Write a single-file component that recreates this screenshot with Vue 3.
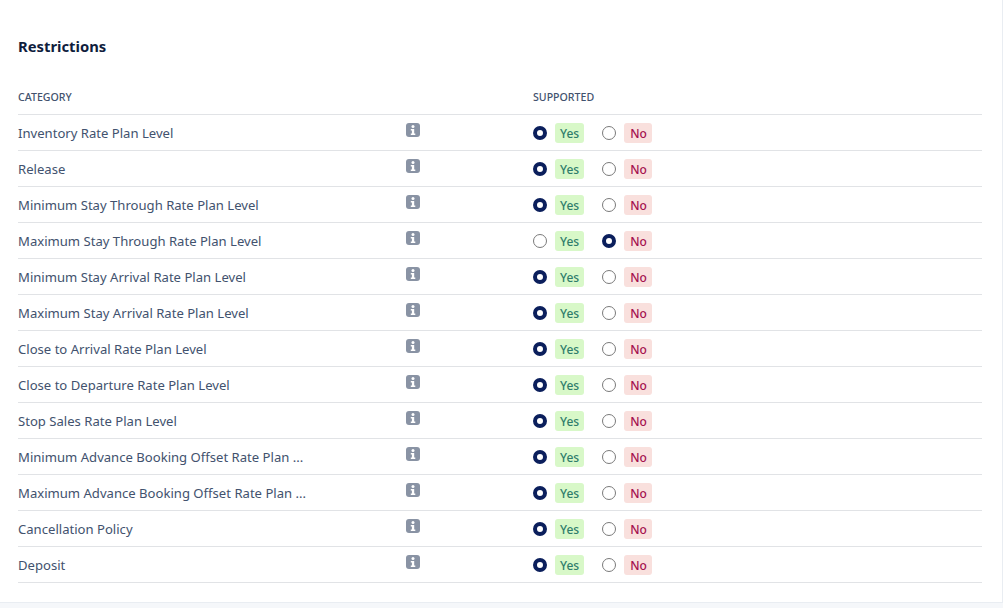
<script setup>
const rows = [
  ['Inventory Rate Plan Level', true],
  ['Release', true],
  ['Minimum Stay Through Rate Plan Level', true],
  ['Maximum Stay Through Rate Plan Level', false],
  ['Minimum Stay Arrival Rate Plan Level', true],
  ['Maximum Stay Arrival Rate Plan Level', true],
  ['Close to Arrival Rate Plan Level', true],
  ['Close to Departure Rate Plan Level', true],
  ['Stop Sales Rate Plan Level', true],
  ['Minimum Advance Booking Offset Rate Plan ...', true],
  ['Maximum Advance Booking Offset Rate Plan ...', true],
  ['Cancellation Policy', true],
  ['Deposit', true],
]
</script>

<template>
  <div class="page">
    <section class="panel">
      <h2 class="title">Restrictions</h2>
      <div class="head">
        <div>CATEGORY</div>
        <div></div>
        <div>SUPPORTED</div>
      </div>
      <div v-for="r in rows" :key="r[0]" class="row">
        <div class="name">{{ r[0] }}</div>
        <div class="info">
          <svg width="14" height="14" viewBox="0 0 14 14">
            <rect x="0" y="0" width="14" height="14" rx="3" fill="#8993a4" />
            <circle cx="7" cy="3.4" r="1.5" fill="#fff" />
            <path d="M4.8 6h3.4v4.4h1.1v1.6H4.8v-1.6h1.1V7.5H4.8z" fill="#fff" />
          </svg>
        </div>
        <div class="choice">
          <span class="radio" :class="{ on: r[1] }"></span>
          <span class="tag yes">Yes</span>
          <span class="radio second" :class="{ on: !r[1] }"></span>
          <span class="tag no">No</span>
        </div>
      </div>
    </section>
  </div>
</template>

<style scoped>
.page {
  width: 1003px;
  height: 608px;
  background: #f5f7fa;
  font-family: "Noto Sans", "Open Sans", sans-serif;
  color: #42526e;
  overflow: hidden;
}
.panel {
  box-sizing: border-box;
  width: 1003px;
  height: 603px;
  padding: 0 20px 0 18px;
  background: #fff;
  border-right: 1px solid #e9edf2;
  border-bottom: 1px solid #e9edf2;
}
.title {
  margin: 0;
  padding-top: 36px;
  height: 43px;
  font-size: 14.8px;
  line-height: 20px;
  font-weight: 700;
  color: #0f1d3d;
  box-sizing: content-box;
}
.head, .row {
  display: grid;
  grid-template-columns: 388px 127px 1fr;
  border-bottom: 1px solid #e1e3e6;
  box-sizing: border-box;
}
.head {
  height: 36px;
  padding-top: 10px;
  font-size: 10.6px;
  line-height: 16px;
  font-weight: 500;
}
.row {
  height: 36px;
  align-items: center;
  font-size: 13.1px;
}
.name {
  white-space: nowrap;
}
.info {
  display: flex;
  height: 35px;
  padding-top: 8px;
  box-sizing: border-box;
}
.choice {
  display: flex;
  align-items: center;
  padding-top: 1px;
}
.radio {
  box-sizing: border-box;
  width: 14px;
  height: 14px;
  border: 1px solid #7a7a7a;
  border-radius: 50%;
  background: #fff;
}
.radio.on {
  border: 4px solid #0b1f5c;
}
.radio.second {
  margin-left: 18px;
}
.tag {
  margin-left: 8px;
  height: 20px;
  padding: 0 5px;
  border-radius: 3px;
  font-size: 12px;
  line-height: 22px;
  font-weight: 500;
}
.yes {
  background: #d8f8c8;
  color: #2f7d6b;
}
.no {
  padding-left: 6px;
  background: #f9e0dd;
  color: #a5114f;
}
</style>
